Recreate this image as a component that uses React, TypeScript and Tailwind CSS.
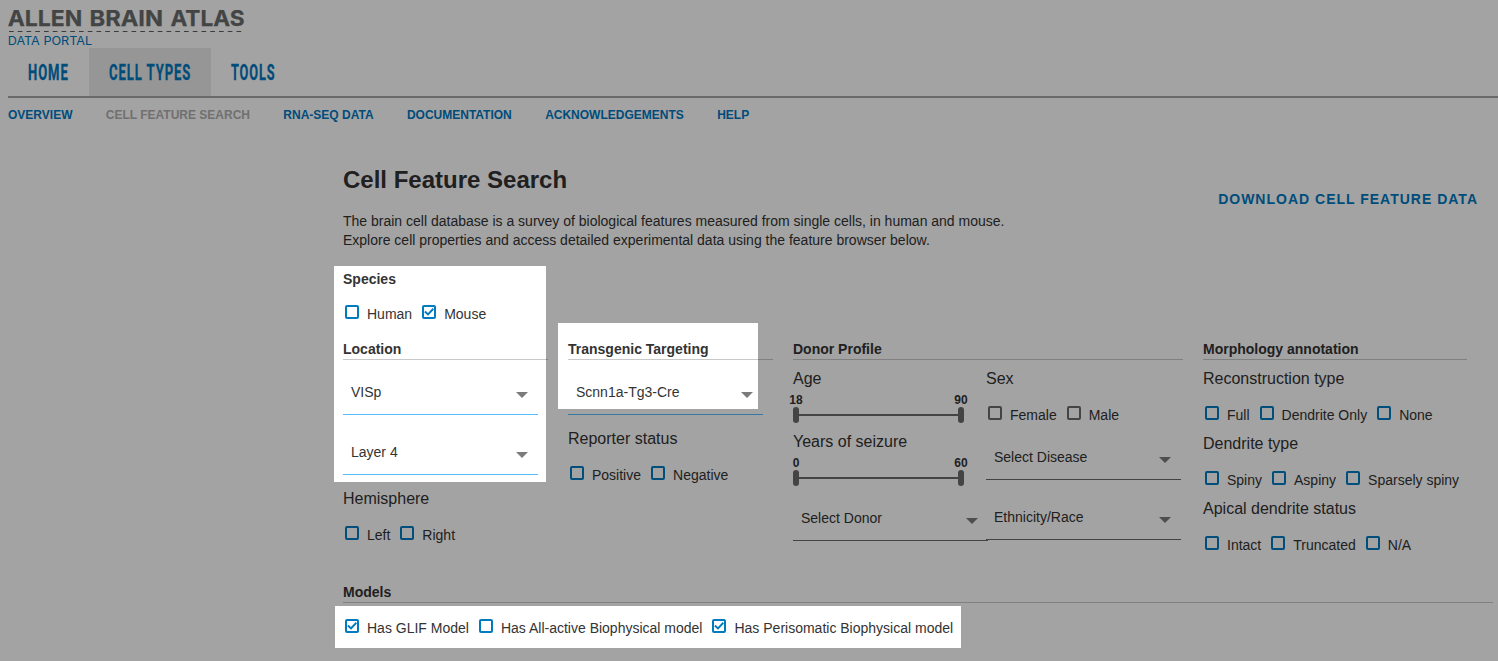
import type { ReactNode } from "react";

function Logo() {
  return (
    <svg width="240" height="48" className="block" fill="none">
      <g fontSize="21.8" fontWeight="700" fill="#6a6c6c" stroke="#6a6c6c" strokeWidth="0.25" fontFamily="Inter, sans-serif">
        <text x="-0.3" y="25.7" textLength="74.5" lengthAdjust="spacingAndGlyphs">ALLEN</text>
        <text x="81.5" y="25.7" textLength="73.5" lengthAdjust="spacingAndGlyphs">BRAIN</text>
        <text x="162.5" y="25.7" textLength="74" lengthAdjust="spacingAndGlyphs">ATLAS</text>
      </g>
      <path d="M1 31.5H235.5" stroke="#5c5e5e" strokeWidth="1" strokeDasharray="4.7 4.05" />
      <text x="-0.3" y="45" fontSize="11.2" fontWeight="400" fill="#0078bf" textLength="84.5" lengthAdjust="spacingAndGlyphs" fontFamily="Inter, sans-serif">
        DATA PORTAL
      </text>
    </svg>
  );
}

function Tab({ label, className, scale }: { label: string; className: string; scale: string }) {
  return (
    <div className={`flex h-12 items-center pl-[19.5px] ${className}`}>
      <span className={`mt-px origin-left whitespace-nowrap font-['Roboto',sans-serif] text-[22.5px] font-bold leading-none tracking-[1.6px] text-[#0078bf] [-webkit-text-stroke:0.3px_#0078bf] ${scale}`}>
        {label}
      </span>
    </div>
  );
}

function Check({ label, checked = false, gray = false }: { label: string; checked?: boolean; gray?: boolean }) {
  return (
    <label className="flex items-start">
      <span className={`ml-[2px] mr-2 flex h-[14px] w-[14px] items-center justify-center rounded-[2px] border-2 ${gray ? "border-[#6b6b6b]" : "border-[#007bc0]"}`}>
        {checked && (
          <svg width="10" height="10" viewBox="0 0 10 10" fill="none" className="shrink-0">
            <path d="M0.9 4.6L4 7.4L9.4 1.8" stroke="#007bc0" strokeWidth="2" />
          </svg>
        )}
      </span>
      <span className="mr-2 whitespace-nowrap leading-[18px]">{label}</span>
    </label>
  );
}

function Group({ title, children, className = "" }: { title: string; children: ReactNode; className?: string }) {
  return (
    <div className={`h-[65px] ${className}`}>
      <div className="h-10 text-base leading-[26px]">{title}</div>
      <div className="flex">{children}</div>
    </div>
  );
}

function Select({ label, className = "", blue = false }: { label: string; className?: string; blue?: boolean }) {
  return (
    <div className={`flex h-[45px] w-[195px] shrink-0 items-center justify-between border-b pl-2 pr-[10px] ${blue ? "border-[#57bdfc]" : "border-[#6b6b6b]"} ${className}`}>
      <span className="leading-5">{label}</span>
      <svg width="12" height="6" viewBox="0 0 12 6" className="mt-[6px]">
        <path d="M0 0H12L6 6Z" fill="#7b7b7b" />
      </svg>
    </div>
  );
}

function Heading({ children }: { children: ReactNode }) {
  return <h2 className="h-[22px] border-b border-[#c8c8c8] font-bold leading-[22px]">{children}</h2>;
}

function Slider({ title, min, max }: { title: string; min: string; max: string }) {
  return (
    <div className="h-[63px]">
      <div className="h-6 text-base leading-[26px]">{title}</div>
      <div className="-ml-[7px] flex h-[17px] w-[185px] justify-between text-xs font-bold leading-[21px]">
        <span className="w-5 text-center">{min}</span>
        <span className="w-5 text-center">{max}</span>
      </div>
      <div className="flex w-[171px] items-center">
        <span className="h-4 w-[6px] rounded-[3px] bg-[#6b6b6b]" />
        <span className="h-[2px] flex-1 bg-[#6b6b6b]" />
        <span className="h-4 w-[6px] rounded-[3px] bg-[#6b6b6b]" />
      </div>
    </div>
  );
}

export default function App() {
  return (
    <div className="relative h-[661px] w-[1498px] overflow-hidden bg-white font-['Liberation_Sans',Arial,sans-serif] text-sm text-[#333]">
      <header className="pl-2">
        <Logo />
        <nav className="flex h-[50px] border-b-2 border-[#a7a7a7]">
          <Tab label="HOME" className="w-[81px]" scale="scale-x-[0.58]" />
          <Tab label="CELL TYPES" className="w-[122px] bg-[#ebebeb]" scale="scale-x-[0.58]" />
          <Tab label="TOOLS" className="w-[100px]" scale="scale-x-[0.565]" />
        </nav>
        <div className="flex h-[34px] gap-[33.34px] text-xs font-bold leading-[34px] text-[#0078bf]">
          <span>OVERVIEW</span>
          <span className="text-[#b0b0b0]">CELL FEATURE SEARCH</span>
          <span>RNA-SEQ DATA</span>
          <span>DOCUMENTATION</span>
          <span>ACKNOWLEDGEMENTS</span>
          <span>HELP</span>
        </div>
      </header>

      <main className="pl-[343px]">
        <div className="flex h-[136px] items-start justify-between pr-5 pt-[32px]">
          <div>
            <h1 className="h-[48px] text-2xl font-bold leading-[32px]">Cell Feature Search</h1>
            <p className="leading-[19px]">
              The brain cell database is a survey of biological features measured from single cells, in human and mouse.
              <br />
              Explore cell properties and access detailed experimental data using the feature browser below.
            </p>
          </div>
          <span className="mt-[25px] font-bold leading-5 tracking-[1px] text-[#0078bf]">DOWNLOAD CELL FEATURE DATA</span>
        </div>

        <section className="h-[70px]">
          <h2 className="h-[37px] font-bold leading-[22px]">Species</h2>
          <div className="flex">
            <Check label="Human" />
            <Check label="Mouse" checked />
          </div>
        </section>

        <div className="flex h-[243px] gap-5">
          <section className="w-[205px]">
            <Heading>Location</Heading>
            <Select label="VISp" className="mt-[10px]" blue />
            <Select label="Layer 4" className="mt-[15px]" blue />
            <Group title="Hemisphere" className="mt-[11px]">
              <Check label="Left" />
              <Check label="Right" />
            </Group>
          </section>

          <section className="w-[205px]">
            <Heading>Transgenic Targeting</Heading>
            <Select label="Scnn1a-Tg3-Cre" className="mt-[10px]" blue />
            <Group title="Reporter status" className="mt-[11px]">
              <Check label="Positive" />
              <Check label="Negative" />
            </Group>
          </section>

          <section className="w-[390px]">
            <Heading>Donor Profile</Heading>
            <div className="flex pt-[6px]">
              <div className="w-[193px]">
                <Slider title="Age" min="18" max="90" />
                <Slider title="Years of seizure" min="0" max="60" />
                <Select label="Select Donor" className="mt-[4px]" />
              </div>
              <div>
                <Group title="Sex">
                  <Check label="Female" gray />
                  <Check label="Male" gray />
                </Group>
                <Select label="Select Disease" className="mt-[4px]" />
                <Select label="Ethnicity/Race" className="mt-[15px]" />
              </div>
            </div>
          </section>

          <section className="w-[264px]">
            <Heading>Morphology annotation</Heading>
            <div className="pt-[6px]">
              <Group title="Reconstruction type">
                <Check label="Full" />
                <Check label="Dendrite Only" />
                <Check label="None" />
              </Group>
              <Group title="Dendrite type">
                <Check label="Spiny" />
                <Check label="Aspiny" />
                <Check label="Sparsely spiny" />
              </Group>
              <Group title="Apical dendrite status">
                <Check label="Intact" />
                <Check label="Truncated" />
                <Check label="N/A" />
              </Group>
            </div>
          </section>
        </div>

        <section className="w-[1150px]">
          <Heading>Models</Heading>
          <div className="flex pt-4">
            <Check label="Has GLIF Model" checked />
            <Check label="Has All-active Biophysical model" />
            <Check label="Has Perisomatic Biophysical model" checked />
          </div>
        </section>
      </main>

      <div className="pointer-events-none absolute inset-0 bg-black/36 [clip-path:polygon(evenodd,0_0,1498px_0,1498px_661px,0_661px,0_0,334px_266px,546px_266px,546px_482px,334px_482px,334px_266px,0_0,558px_323px,758px_323px,758px_409px,558px_409px,558px_323px,0_0,335px_606px,961px_606px,961px_648px,335px_648px,335px_606px,0_0)]" />
    </div>
  );
}
